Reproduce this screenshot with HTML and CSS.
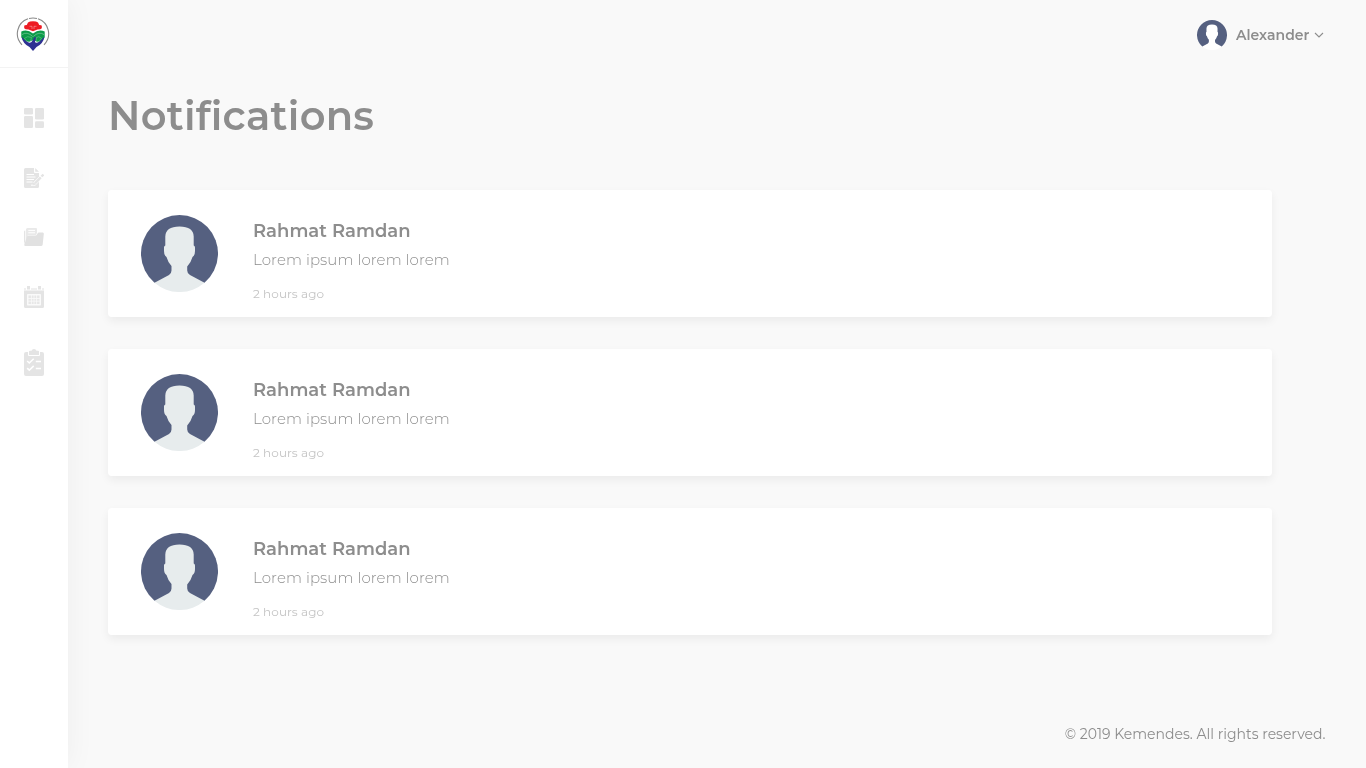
FILE: index.html
```html
<!DOCTYPE html>
<html lang="en">
<head>
<meta charset="utf-8">
<title>Notifications</title>
<link rel="stylesheet" href="styles.css">
</head>
<body>
<svg width="0" height="0" class="defs">
  <symbol id="person" viewBox="0 0 77 77">
    <path d="M13.5 67.8A38.5 38.5 0 1 1 63.5 67.8L38.5 72Z" fill="#556080"/>
    <path d="M13.5 67.8L28 60Q30.5 58.4 30.5 55.5V51Q27 47.5 25.5 42Q23 40.5 23 36V32.5Q23 31 24.3 30.5V21.5Q24.5 11.5 38.5 11.5T52.7 21.5V30.5Q54 31 54 32.5V36Q54 40.5 51.5 42Q50 47.5 46.2 51.5V55.5Q46.2 58.4 49 60L63.5 67.8A38.5 38.5 0 0 1 13.5 67.8Z" fill="currentColor"/>
  </symbol>
</svg>
<div class="app">
  <aside class="sidebar">
    <div class="brand">
      <svg width="34" height="36" viewBox="0 0 34 36">
        <path d="M6 28.8A15.7 15.7 0 0 1 12 2.8M13 2.5A15.7 15.7 0 0 1 21 2.5M22 2.8A15.7 15.7 0 0 1 28 28.8" fill="none" stroke="#8a8a8a" stroke-width="1.1"/>
        <path d="M8.2 12.2V9.8Q8.4 9 10.8 9L12 6.5Q13.5 5.3 17 5.3T22 6.5L23.2 9Q25.6 9 25.8 9.8V12.2Q25 13.6 21.5 13.6L17 15.2L12.5 13.6Q9 13.6 8.2 12.2Z" fill="#ed1c24"/>
        <path d="M13.5 10.3H16V13M20.5 10.3H18V13" stroke="#fff" stroke-opacity=".5" stroke-width=".7" fill="none"/>
        <path d="M5.3 15.5Q11 12.5 17 17.5Q23 12.5 28.7 15.5V21L25 26L17 24.5L9 26L5.3 21Z" fill="#0c9b49"/>
        <path d="M6 18.6Q11 15 16.7 20.5M28 18.6Q23 15 17.3 20.5" fill="none" stroke="#fff" stroke-opacity=".55" stroke-width=".6"/>
        <path d="M5.3 20.5L9.5 24.5Q12.5 27.5 15.2 26.3Q17 25 18 21.5L20 21L19 26.3Q22 27.5 24.5 24.5L28.7 20.5Q27 28 20.5 31L17 35L13.5 31Q7 28 5.3 20.5Z" fill="#2e3192"/>
        <path d="M8.5 22.3Q11.5 19.5 15.5 21.5L14.5 25.5Q11 27 8.5 22.3ZM25.5 22.3Q22.5 19.5 20.5 21.5L20 25.5Q23 27 25.5 22.3Z" fill="#0c9b49" stroke="#fff" stroke-opacity=".6" stroke-width=".4"/>
      </svg>
    </div>
    <nav class="menu">
      <a class="item"><svg width="20" height="20" viewBox="0 0 20 20" fill="#e4e4e4"><rect width="9" height="6.6" rx="1.3"/><rect y="8" width="9" height="12" rx="1.3"/><rect x="11" width="9" height="11.6" rx="1.3"/><rect x="11" y="13.2" width="9" height="6.8" rx="1.3"/></svg></a>
      <a class="item"><svg width="20" height="20" viewBox="0 0 20 20"><path d="M1.5 0H10V4Q10 5 11 5H15V18.5Q15 20 13.5 20H1.5Q0 20 0 18.5V1.5Q0 0 1.5 0ZM11.2 0L15 3.8H11.2Z" fill="#e4e4e4"/><path d="M2.5 6.5H10M2.5 9H11.5M2.5 11.5H10M2.5 14H8.5M7 17.2H11.5" stroke="#fff"/><path d="M10.5 15.8L18.8 7.5" stroke="#fff" stroke-width="3.6"/><path d="M11 15.3L16.8 9.3M17.4 8.5L19.5 6.5" stroke="#e4e4e4" stroke-width="2.4"/><path d="M9 17.3L9.9 14.3L12 16.4Z" fill="#e4e4e4"/></svg></a>
      <a class="item"><svg width="20" height="20" viewBox="0 0 20 20"><path d="M0 17V4.5Q0 3.5 1.3 3.5V14Z" fill="#e4e4e4"/><path d="M2 14V2.5Q2 1 3.5 1H12Q13 1 13 2V6L12 8H4Z" fill="#e9e9e9"/><path d="M4.3 3.4H11M4.3 5.8H11" stroke="#fff"/><path d="M4.4 8.5H11.5Q12.5 8.5 13 7.5L13.5 6.5Q14 5.5 15 5.5H18.7Q20 5.5 19.8 7L18.7 17.5Q18.5 19 17 19H1.5Q0 19 .3 17.5L2.8 10Q3.2 8.5 4.4 8.5Z" fill="#e1e1e1"/></svg></a>
      <a class="item"><svg width="20" height="22" viewBox="0 0 20 22"><path d="M3 0H6V3.5H3ZM14 0H17V3.5H14Z" fill="#e4e4e4"/><path d="M0 2H2V4H7V2H13V4H18V2H20V5H0Z" fill="#f0f0f0"/><path d="M0 5H20V20.5Q20 22 18.5 22H1.5Q0 22 0 20.5Z" fill="#e4e4e4"/><rect x="3" y="8" width="14" height="11.5" rx=".7" fill="#fafafa"/><path d="M4.5 9.5H15.5V18H4.5Z" fill="#e7e7e7"/><path d="M7.4 9V18.5M10 9V18.5M12.6 9V18.5M4 12.5H16M4 15.2H16" stroke="#fafafa" stroke-width=".8"/></svg></a>
      <a class="item"><svg width="20" height="27" viewBox="0 0 20 27"><path d="M2 3H4V6Q4 7 5 7H15Q16 7 16 6V3H18Q20 3 20 5V25Q20 27 18 27H2Q0 27 0 25V5Q0 3 2 3ZM5 2.5Q5 1.8 6 1.8H7.5Q8 0 10 0T12.5 1.8H14Q15 1.8 15 2.5V6H5Z" fill="#e4e4e4"/><path d="M3.2 12L5.3 14L9.7 9.7M3.2 19.2L5.3 21.2L9.7 16.9M11.8 12.5H17M11.8 19.5H17" fill="none" stroke="#fff" stroke-width="1.6"/></svg></a>
    </nav>
  </aside>
  <div class="page">
    <header class="topbar">
      <svg class="user-pic" width="30" height="30"><use href="#person"/></svg>
      <span class="user-name">Alexander</span>
      <svg class="chevron" width="10" height="6" viewBox="0 0 10 6"><path d="M1 1L5 5L9 1" fill="none" stroke="#8d8d8d" stroke-width="1.1"/></svg>
    </header>
    <main class="content">
      <h1 class="title">Notifications</h1>
      <section class="list">
        <article class="card"><svg class="avatar" width="77" height="77"><use href="#person"/></svg><div class="info"><h2 class="name">Rahmat Ramdan</h2><p class="message">Lorem ipsum lorem lorem</p><time class="time">2 hours ago</time></div></article>
        <article class="card"><svg class="avatar" width="77" height="77"><use href="#person"/></svg><div class="info"><h2 class="name">Rahmat Ramdan</h2><p class="message">Lorem ipsum lorem lorem</p><time class="time">2 hours ago</time></div></article>
        <article class="card"><svg class="avatar" width="77" height="77"><use href="#person"/></svg><div class="info"><h2 class="name">Rahmat Ramdan</h2><p class="message">Lorem ipsum lorem lorem</p><time class="time">2 hours ago</time></div></article>
      </section>
    </main>
    <footer class="footer"><span class="copyright">© 2019 Kemendes. All rights reserved.</span></footer>
  </div>
</div>
</body>
</html>
```
FILE: styles.css
```css
* { box-sizing: border-box; }
body { margin: 0; background: #f9f9f9; font-family: Montserrat, Inter, sans-serif; color: #8d8d8d; }
h1, h2, p { margin: 0; }
svg { display: block; flex: none; }
.defs { display: none; }
.app { display: flex; height: 768px; overflow: hidden; }
.sidebar { width: 68px; flex: none; background: #fff; box-shadow: 0 0 30px rgba(0, 0, 0, .05); }
.brand { height: 68px; padding: 16px 0 0 16px; border-bottom: 1px solid #f3f3f3; }
.menu { display: grid; grid-template-rows: 60px 60px 58px 62px 68px; padding-top: 20px; justify-content: center; }
.item { display: flex; align-items: center; }
.page { flex: 1; display: flex; flex-direction: column; will-change: transform; }
.topbar { height: 70px; display: flex; align-items: center; justify-content: flex-end; padding-right: 42px; }
.user-pic { color: #fff; }
.user-name { width: 74px; margin: 0 4px 0 9px; font-size: 14px; font-weight: 600; letter-spacing: .03px; white-space: nowrap; }
.content { flex: 1; padding: 16px 94px 0 40px; }
.title { height: 60px; line-height: 60px; font-size: 40px; font-weight: 600; letter-spacing: .25px; white-space: nowrap; }
.list { display: grid; gap: 32px; margin-top: 44px; }
.card { height: 127px; display: flex; padding: 25px 33px 0; gap: 35px; background: #fff; border-radius: 4px; box-shadow: 0 4px 10px rgba(0, 0, 0, .06); }
.avatar { color: #e7eced; }
.info { white-space: nowrap; }
.name { height: 32px; line-height: 32px; font-size: 18px; font-weight: 600; letter-spacing: .02px; }
.message { height: 26px; line-height: 26px; font-size: 15px; font-weight: 300; letter-spacing: .08px; }
.time { display: block; margin-top: 12px; line-height: 18px; font-size: 12px; color: #c4c4c4; letter-spacing: .07px; }
.footer { height: 68px; display: flex; justify-content: flex-end; align-items: center; padding-right: 40.5px; font-size: 14px; }
```
